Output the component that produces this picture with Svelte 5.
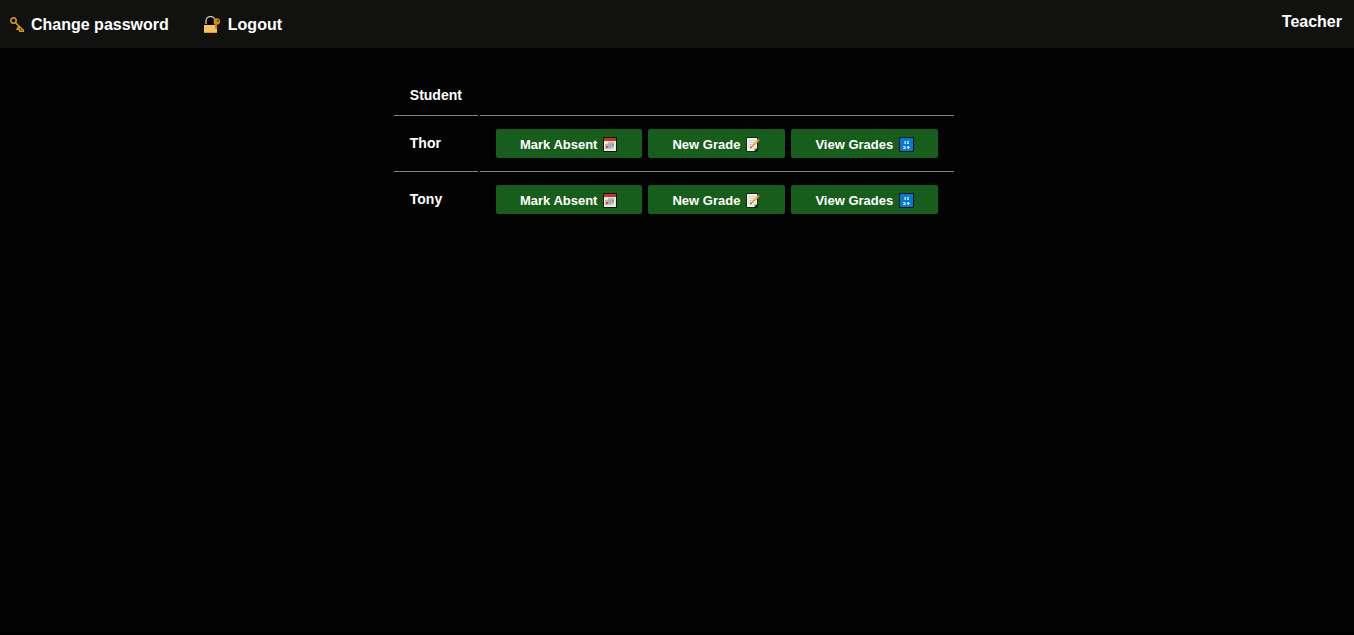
<script>
  const students = ['Thor', 'Tony'];
</script>

<div class="page">
  <header>
    <nav>
      <a href="#password">
        <svg class="key" width="16" height="18" viewBox="0 0 16 18" aria-hidden="true">
          <g fill="none" stroke="#050403" stroke-width="4" opacity=".6">
            <circle cx="5.5" cy="4.5" r="2.7" />
            <path d="M7.5 7l6.5 7M11.5 12l-2 1.5" />
          </g>
          <circle cx="5.5" cy="4.5" r="2.7" fill="none" stroke="#e39b10" stroke-width="1.5" />
          <path d="M7.5 6.8l7 6.8M10.8 10.5l-1.5 2.7h2l.7 2h3.5v-2" fill="none" stroke="#e39b10" stroke-width="1.6" />
        </svg>
        <span>Change password</span>
      </a>
      <a href="#logout">
        <svg width="18" height="18" viewBox="0 0 18 18" aria-hidden="true">
          <path d="M3 9V5a4.5 4.5 0 0 1 9 0v4z" fill="#000" />
          <path d="M3 9V5a4.5 4.5 0 0 1 9 0v4" fill="none" stroke="#c4c6c4" stroke-width="1.3" />
          <path d="M.5 8.5h14v8.8H.5z" fill="#f9c454" stroke="#090705" />
          <path d="M12.5 6l1 7" stroke="#b97b12" stroke-width="2" />
          <circle cx="13.8" cy="5.4" r="3.2" fill="#d9900c" />
          <circle cx="14.8" cy="4.8" r="1" fill="#4c300b" />
        </svg>
        <span>Logout</span>
      </a>
    </nav>
    <div class="role">Teacher</div>
  </header>

  <main>
    <table>
      <thead>
        <tr><th scope="col">Student</th><td></td></tr>
      </thead>
      <tbody>
        {#each students as student}
          <tr>
            <th scope="row">{student}</th>
            <td>
              <div class="actions">
                <button type="button">
                  <span>Mark Absent</span>
                  <svg width="15" height="15" viewBox="0 0 15 15" aria-hidden="true">
                    <path d="M0 0h14v15H0z" fill="#17120f" />
                    <path d="M1 1h12v3H1z" fill="#cd3512" />
                    <path d="M1 4h12v10H1z" fill="#e9e8e6" />
                    <path d="M2 7h3V5h6v6H9v1H2z" fill="#b8b8ba" />
                    <path d="M5 7h3v3H5z" fill="#a9a9ab" />
                    <path d="M9 7h2v2H9z" fill="#969698" />
                    <path d="M3 9h2v2H3z" fill="#d54a20" />
                  </svg>
                </button>
                <button type="button">
                  <span>New Grade</span>
                  <svg width="15" height="15" viewBox="0 0 15 15" aria-hidden="true">
                    <path d="M0 0h12v15H0z" fill="#152d18" />
                    <path d="M1 1h10v10l-3 3H1z" fill="#f0efeb" />
                    <path d="M2.5 3.5h7M2.5 5.5h6M2.5 7.5h4M2.5 9.5h2" stroke="#cfcfcd" />
                    <path d="M8 14v-3h3z" fill="#adadab" />
                    <path d="M5 10.5l7.3-7.3" stroke="#e9aa38" stroke-width="2" />
                    <path d="M11.7 3.7l1.4-1.4" stroke="#db6a50" stroke-width="2" />
                    <path d="M4 11.5l.4-2 1.5 1.5z" fill="#4c4134" />
                  </svg>
                </button>
                <button type="button">
                  <span>View Grades</span>
                  <svg width="15" height="15" viewBox="0 0 15 15" aria-hidden="true">
                    <path d="M0 0h15v15H0z" fill="#071421" />
                    <path d="M1 1h13v13H1z" fill="#0878d2" />
                    <path d="M5 4h2v3H5zM8 4h2v3H8zM5 9h2v3H5zM8 9h2v3H8z" fill="#5fb3f0" />
                    <path d="M6 4h1v3H6zM8 4h2v1H8zM8 6h2v1H8zM4 9h2v1H4zM6 10h1v1H6zM4 11h2v1H4zM8 10h3v1H8zM9 9h1v3H9z" fill="#c3e7ff" />
                  </svg>
                </button>
              </div>
            </td>
          </tr>
        {/each}
      </tbody>
    </table>
  </main>
</div>

<style>
  :global(body) {
    margin: 0;
    background: #000;
  }
  .page {
    min-height: calc(100vh - 3px);
    background: #030303;
    color: #fff;
    font-family: "Liberation Sans", Arial, sans-serif;
    font-weight: bold;
  }
  header {
    display: flex;
    justify-content: space-between;
    height: 48px;
    padding: 2px 12px 0 8px;
    box-sizing: border-box;
    background: #11110f;
    font-size: 16px;
    line-height: 18px;
  }
  nav {
    display: flex;
    align-items: center;
    gap: 34px;
  }
  a {
    display: flex;
    align-items: center;
    gap: 7px;
    color: inherit;
    text-decoration: none;
  }
  .role {
    padding-top: 11px;
  }
  main {
    padding: 24px 6px 0 0;
  }
  table {
    margin: 0 auto;
    border-spacing: 2px;
    font-size: 14px;
    line-height: 16px;
  }
  th,
  td {
    padding: 11px 16px 13px;
    text-align: left;
    border-bottom: 1px solid #808080;
  }
  thead th {
    padding: 13px 16px 12px;
  }
  tbody th {
    padding: 10px 16px 14px;
  }
  tbody tr:last-child > * {
    border-bottom: 0;
  }
  .actions {
    display: flex;
    gap: 6px;
  }
  button {
    display: flex;
    align-items: center;
    gap: 6px;
    height: 29px;
    padding: 2px 24px 0;
    border: 0;
    border-radius: 2px;
    background: #175d1b;
    color: #fff;
    font: bold 13px/15px "Liberation Sans", Arial, sans-serif;
    cursor: pointer;
  }
  svg {
    display: block;
    flex: none;
  }
</style>
